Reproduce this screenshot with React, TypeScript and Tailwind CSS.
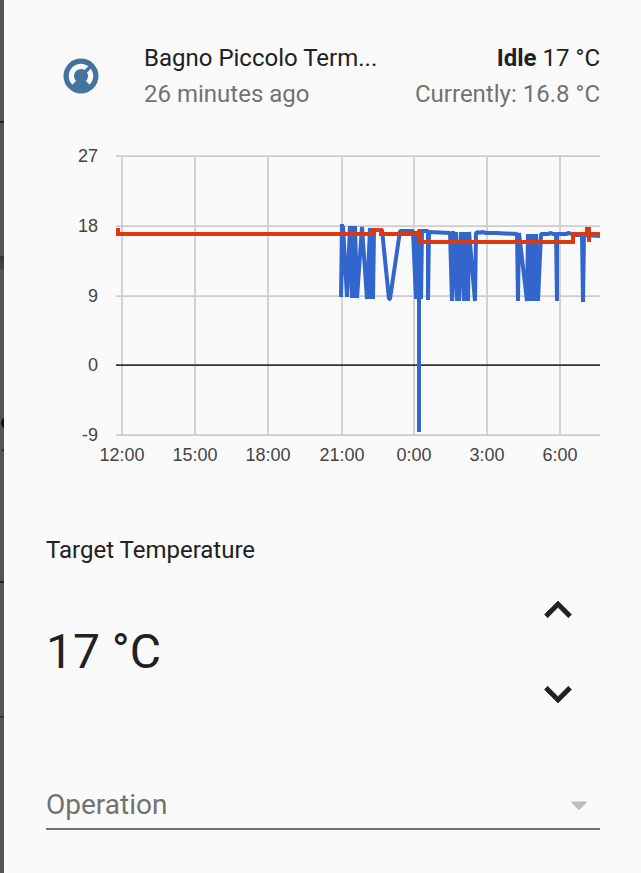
import { useState } from 'react'

const yTicks = [
  { label: '27', y: 16 },
  { label: '18', y: 86 },
  { label: '9', y: 156 },
  { label: '0', y: 225 },
  { label: '-9', y: 295 },
]

const xTicks = [
  { label: '12:00', x: 76 },
  { label: '15:00', x: 149 },
  { label: '18:00', x: 222 },
  { label: '21:00', x: 296 },
  { label: '0:00', x: 368 },
  { label: '3:00', x: 441 },
  { label: '6:00', x: 514 },
]

// measured temperature, in chart units
const currentLine =
  '296,84 295,157 297,86 301,157 304,86 306,158 306,86 308,158 309,86 311,158 316,87 321,159 ' +
  '324,88 323,159 326,88 327,159 328,90 336,90 343,159 344,159 354,91 367,91 370,159 369,92 372,159 ' +
  '371,91 373,159 373,292 373,90 375,159 376,91 382,91 382,160 383,92 404,93 406,161 407,91 ' +
  '411,161 410,92 413,161 415,92 418,161 419,92 422,161 423,92 429,161 430,93 432,92 434,93 ' +
  '436,92 440,93 450,93 470,94 471,93 472,161 473,93 481,161 482,94 483,161 485,94 ' +
  '486,161 488,94 489,161 490,94 492,161 495,94 502,94 505,93 507,94 510,94 511,161 511,94 ' +
  '520,94 523,93 528,95 536,95 537,162 538,95 554,96'

// target temperature
const targetLine =
  '72,88 72,94 327,94 327,90 335,90 335,94 374,94 374,89 374,102 527,102 527,94 541,94 541,89 543,89 543,102 543,94 554,94'

function HistoryChart() {
  return (
    <svg viewBox="0 0 554 330" className="w-full" role="img" aria-label="Temperature">
      <g stroke="#cccccc" strokeWidth="1.75">
        {xTicks.map((t) => (
          <line key={t.label} x1={t.x} x2={t.x} y1="16" y2="295" />
        ))}
        {yTicks.map((t) => (
          <line key={t.label} x1="70" x2="554" y1={t.y} y2={t.y} stroke={t.label === '0' ? '#333333' : '#cccccc'} />
        ))}
      </g>
      <polyline points={currentLine} fill="none" stroke="#3366cc" strokeWidth="4" strokeLinejoin="bevel" />
      <polyline points={targetLine} fill="none" stroke="#dc3912" strokeWidth="4" />
      <g fill="#444444" fontSize="18" className="font-['Liberation_Sans',sans-serif]">
        {yTicks.map((t) => (
          <text key={t.label} x="52" y={t.y + 6} textAnchor="end">{t.label}</text>
        ))}
        {xTicks.map((t) => (
          <text key={t.label} x={t.x} y="321" textAnchor="middle">{t.label}</text>
        ))}
      </g>
    </svg>
  )
}

function ThermostatIcon() {
  return (
    <svg viewBox="0 0 24 24" className="size-[42px] shrink-0" fill="#44739e" aria-hidden="true">
      <path d="M16.95,16.95L14.83,14.83C15.55,14.1 16,13.1 16,12C16,11.26 15.79,10.57 15.43,10L17.6,7.81C18.5,9 19,10.43 19,12C19,13.93 18.22,15.68 16.95,16.95M12,5C13.57,5 15,5.5 16.19,6.4L14,8.56C13.43,8.21 12.74,8 12,8A4,4 0 0,0 8,12C8,13.1 8.45,14.1 9.17,14.83L7.05,16.95C5.78,15.68 5,13.93 5,12A7,7 0 0,1 12,5M12,2A10,10 0 0,0 2,12A10,10 0 0,0 12,22A10,10 0 0,0 22,12A10,10 0 0,0 12,2Z" />
    </svg>
  )
}

export default function App() {
  const [target, setTarget] = useState(17)

  return (
    <div className="flex min-h-screen bg-[#fafafa] font-['Roboto',sans-serif] text-[#212121]">
      {/* Dimmed page behind the dialog */}
      <div className="relative w-1 shrink-0 overflow-hidden bg-[#575451]">
        <div className="absolute top-[121px] h-0.5 w-full bg-[#222222]" />
        <div className="absolute top-[256px] h-3.5 w-full bg-linear-to-b from-[#383634] to-[#4c4a47]" />
        <div className="absolute top-[417px] left-px size-3 rounded-full bg-[#111111]" />
        <div className="absolute top-[449px] left-0.5 h-0.5 w-full bg-[#2b2a29]" />
        <div className="absolute top-[581px] h-0.5 w-full bg-[#222222]" />
        <div className="absolute top-[716px] h-0.5 w-full bg-[#383634]" />
      </div>

      <main className="min-w-0 flex-1 pt-10 pr-[41px] pb-10 pl-[42px]">
        {/* State header */}
        <header className="flex items-center text-2xl leading-9">
          <div className="flex w-[98px] shrink-0 pl-3.5">
            <ThermostatIcon />
          </div>
          <div className="min-w-0 flex-1">
            <h1 className="truncate">Bagno Piccolo Term...</h1>
            <p className="truncate text-[#727272]">26 minutes ago</p>
          </div>
          <div className="shrink-0 text-right">
            <p><b className="font-bold">Idle</b> 17 °C</p>
            <p className="text-[#727272]">Currently: 16.8 °C</p>
          </div>
        </header>

        <section className="mt-7">
          <HistoryChart />
        </section>

        {/* Target temperature */}
        <section className="mt-[62px]">
          <h2 className="text-2xl leading-9">Target Temperature</h2>
          <div className="mt-[15px] flex items-center justify-between pr-[15px]">
            <output className="text-5xl">{target} °C</output>
            <div className="flex flex-col gap-[30px]">
              <button type="button" aria-label="Increase" onClick={() => setTarget(target + 1)}>
                <svg viewBox="0 0 24 24" className="size-[54px]" fill="currentColor">
                  <path d="M7.41,15.41L12,10.83L16.59,15.41L18,14L12,8L6,14L7.41,15.41Z" stroke="currentColor" strokeWidth="0.3" />
                </svg>
              </button>
              <button type="button" aria-label="Decrease" onClick={() => setTarget(target - 1)}>
                <svg viewBox="0 0 24 24" className="size-[54px]" fill="currentColor">
                  <path d="M7.41,8.59L12,13.17L16.59,8.59L18,10L12,16L6,10L7.41,8.59Z" stroke="currentColor" strokeWidth="0.3" />
                </svg>
              </button>
            </div>
          </div>
        </section>

        {/* Operation mode */}
        <section className="relative mt-[61px] flex items-center border-b-2 border-[#727272]">
          <label htmlFor="operation" className="flex-1 text-[28px] leading-[46px] text-[#727272]">Operation</label>
          <svg viewBox="0 0 24 24" className="size-[42px]" fill="#bdbdbd" aria-hidden="true">
            <path d="M7 10l5 5 5-5z" />
          </svg>
          <select id="operation" className="absolute inset-0 size-full cursor-pointer appearance-none bg-transparent" />
        </section>
      </main>
    </div>
  )
}
